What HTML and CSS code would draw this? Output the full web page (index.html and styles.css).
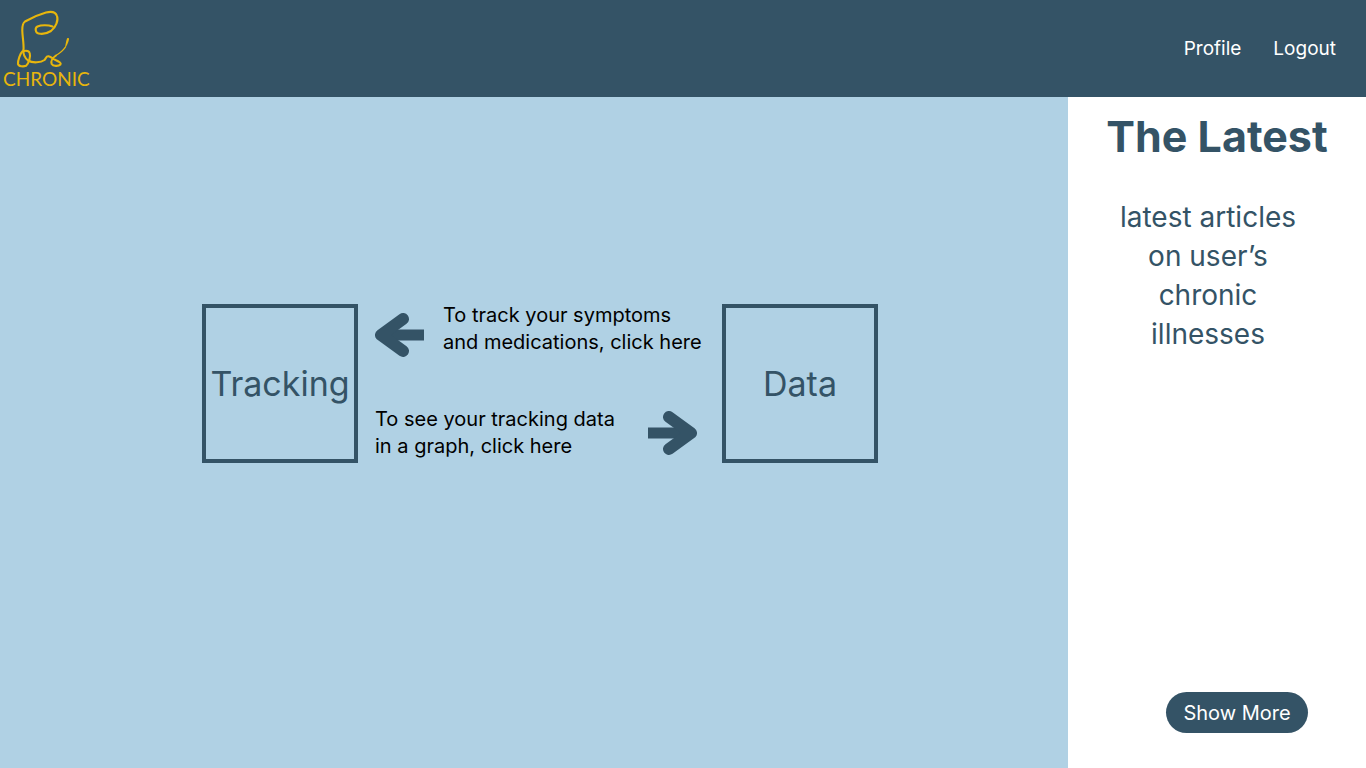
FILE: index.html
```html
<!DOCTYPE html>
<html lang="en">
<head>
<meta charset="utf-8">
<meta name="viewport" content="width=device-width, initial-scale=1">
<title>Chronic</title>
<link rel="stylesheet" href="styles.css">
</head>
<body>
<header class="topbar">
  <a class="logo" href="#">
    <svg class="logo-mark" width="58" height="60" viewBox="14 9 58 60" fill="none" stroke="#e8b60c" stroke-width="2.100" stroke-linecap="round" stroke-linejoin="round" aria-hidden="true">
      <path d="M52.5 26.5C48 24.8 41 25 37.5 26.5C34.5 28 35.5 33 38.5 33.5C42 34.2 47 33.500 51 31C56 27.500 58.500 20 57 16C55.500 11.500 51 11.300 46 12.500C39 14.500 30 18.500 25 21.500C22 23.500 22.300 27 22.300 31C22.500 37 24 44 23.500 50C23 54 24.500 57.500 28 60.500C33 63.500 41 62.500 44.500 60C46.500 57.500 46 56 48.500 56.300C51.500 57 52.500 58.500 55.500 60C59 61.500 61.500 63 60.500 64.500C58.500 66.500 53 66.300 51.700 64C50.500 61 53 57.500 56 55.500"/>
      <path d="M22.500 51.200C26 50.300 29 50.500 29.700 53C31 57 28.500 64 26 65.800C23.500 66.800 18.500 66.500 18 64C17.700 60 20.500 53 22.500 51.200Z"/>
      <path stroke-width="1.3" d="M55.500 55.800C60 53 63 51 65 47.500"/>
      <path stroke="none" fill="#e8b60c" d="M67 38.400C68.500 37.500 69.200 38.300 69 39.400C68.300 42.500 66.500 46 64.500 49.500C65.500 45.500 65.800 41.500 67 38.400Z"/>
    </svg>
    <span class="logo-name">CHRONIC</span>
  </a>
  <nav class="nav">
    <a href="#">Profile</a>
    <a href="#">Logout</a>
  </nav>
</header>
<div class="page">
  <main class="board">
    <a class="tile" href="#">Tracking</a>
    <div class="hints">
      <div class="hint hint-start">
        <svg class="arrow" width="50" height="46" viewBox="0 0 50 46" aria-hidden="true"><path d="M49 23H8" stroke-width="11"/><path d="M28 7L6 23L28 39" stroke-width="12" stroke-linecap="round" stroke-linejoin="round"/></svg>
        <p>To track your symptoms<br>and medications, click here</p>
      </div>
      <div class="hint hint-end">
        <p>To see your tracking data<br>in a graph, click here</p>
        <svg class="arrow" width="50" height="46" viewBox="0 0 50 46" aria-hidden="true"><path d="M1 23H42" stroke-width="11"/><path d="M22 7L44 23L22 39" stroke-width="12" stroke-linecap="round" stroke-linejoin="round"/></svg>
      </div>
    </div>
    <a class="tile" href="#">Data</a>
  </main>
  <aside class="latest">
    <h1>The Latest</h1>
    <p class="articles">latest articles on user’s chronic illnesses</p>
    <button class="more" type="button">Show More</button>
  </aside>
</div>
</body>
</html>
```
FILE: styles.css
```css
* { box-sizing: border-box; }
body {
  margin: 0;
  min-height: 100vh;
  display: flex;
  flex-direction: column;
  font-family: Inter, "Liberation Sans", sans-serif;
  font-size: 20px;
  color: #000;
}
a { color: inherit; text-decoration: none; }
p, h1 { margin: 0; }
.topbar {
  display: flex;
  justify-content: space-between;
  align-items: center;
  height: 97px;
  padding: 0 30px 0 3px;
  background: #345366;
  color: #fff;
}
.logo {
  display: flex;
  flex-direction: column;
  color: #e8b60c;
}
.logo-mark { margin-left: 11px; }
.logo-name {
  font-family: Lato, sans-serif;
  font-size: 19px;
  line-height: 20px;
}
.nav { display: flex; gap: 32px; font-size: 19px; }
.page {
  flex: 1;
  display: grid;
  grid-template-columns: 1fr 298px;
}
.board {
  display: flex;
  justify-content: center;
  align-items: center;
  padding: 0 0 98px 12px;
  background: #b0d1e4;
}
.tile {
  display: flex;
  justify-content: center;
  align-items: center;
  width: 156px;
  height: 159px;
  border: 4px solid #345366;
  color: #345366;
  font-size: 34px;
}
.hints {
  display: flex;
  flex-direction: column;
  gap: 48px;
  width: 364px;
  padding: 0 25px 6px 17px;
}
.hint {
  display: flex;
  align-items: center;
  gap: 18px;
  line-height: 27px;
  white-space: nowrap;
}
.hint-start { align-items: flex-start; }
.hint-start .arrow { margin-top: 10px; }
.hint-end { justify-content: space-between; }
.arrow { flex: none; fill: none; stroke: #345366; }
.latest {
  display: flex;
  flex-direction: column;
  align-items: center;
  padding: 12px 0 35px;
  background: #fff;
  color: #345366;
  text-align: center;
}
.latest h1 { font-size: 43px; line-height: 54px; }
.articles {
  width: 190px;
  margin: 35px 18px 0 0;
  font-size: 28px;
  line-height: 39px;
}
.more {
  margin: auto 0 0 40px;
  width: 142px;
  height: 41px;
  border: 0;
  border-radius: 21px;
  background: #345366;
  color: #fff;
  font: inherit;
}
```
